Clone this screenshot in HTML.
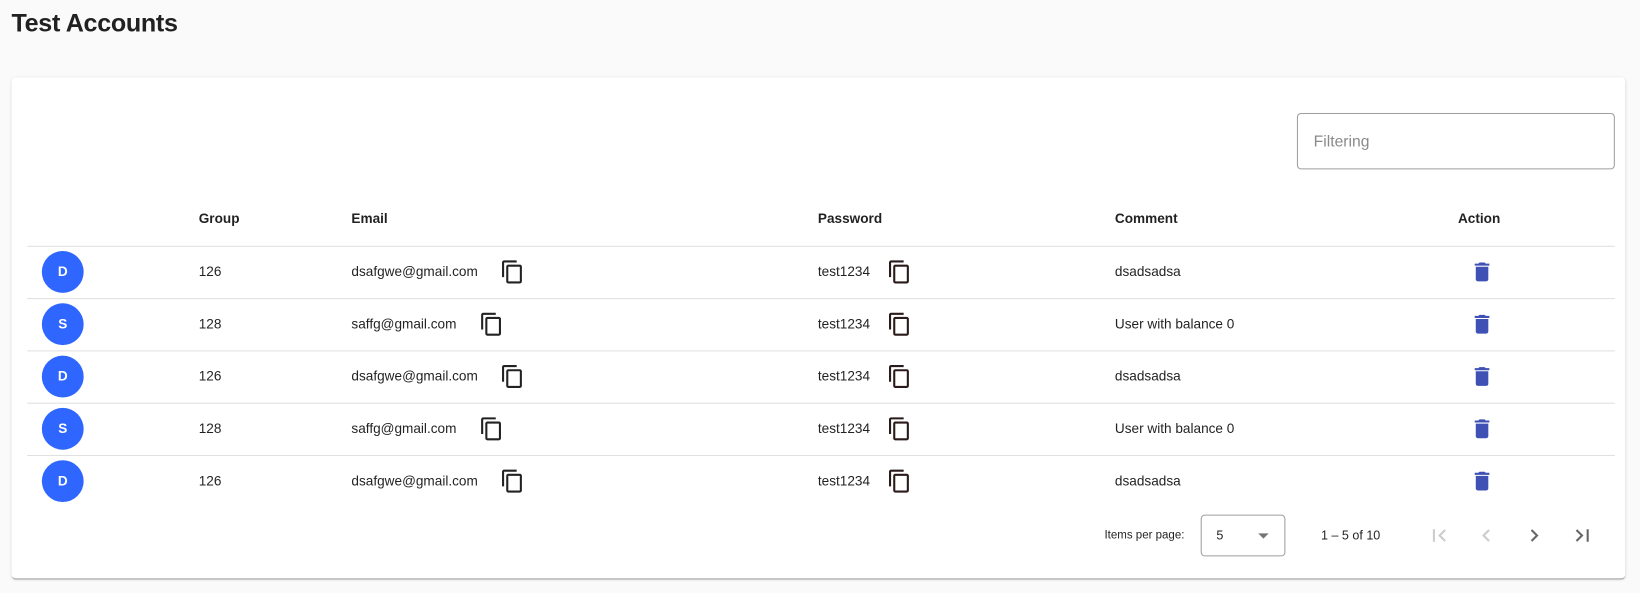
<!DOCTYPE html>
<html><head><style>
*{box-sizing:border-box;margin:0;padding:0}
html,body{width:1640px;height:593px;overflow:hidden;background:#fafafa}
#w{position:absolute;left:0;top:0;width:1568px;height:567px;transform:scale(1.0459);transform-origin:0 0;font-family:"Liberation Sans",sans-serif;color:rgba(0,0,0,.87)}
h1{position:absolute;left:11px;top:9px;font-size:24px;font-weight:bold;color:#212121;letter-spacing:-0.3px}
.card{position:absolute;left:11px;top:74px;width:1543px;height:479px;background:#fff;border-radius:4px;box-shadow:0 2px 1px -1px rgba(0,0,0,.2),0 1px 1px 0 rgba(0,0,0,.14),0 1px 3px 0 rgba(0,0,0,.12)}
.filter{position:absolute;left:1240px;top:108px;width:304px;height:54px;border:1px solid #9e9e9e;border-radius:4px;font-size:15px;color:#8a8a8a;padding:18px 0 0 15px}
.t{position:absolute;font-size:13px;white-space:nowrap}
.h{font-weight:bold;font-size:13px;color:rgba(0,0,0,.87)}
.line{position:absolute;left:26px;width:1518px;height:1px;background:#e0e0e0}
.av{position:absolute;left:40px;width:40px;height:40px;border-radius:50%;background:#2f66ff;color:#fff;font-size:13px;font-weight:bold;text-align:center;line-height:40px}
svg{position:absolute}
.sel{position:absolute;left:1148px;top:492px;width:81px;height:40px;border:1px solid #9e9e9e;border-radius:4px}
</style></head><body><div id="w">
<h1>Test Accounts</h1>
<div class="card"></div>
<div class="filter">Filtering</div>
<div class="t h" style="left:190px;top:201px">Group</div>
<div class="t h" style="left:336px;top:201px">Email</div>
<div class="t h" style="left:782px;top:201px">Password</div>
<div class="t h" style="left:1066px;top:201px">Comment</div>
<div class="t h" style="left:1394px;top:201px">Action</div>
<div class="line" style="top:235px"></div>
<div class="line" style="top:285px"></div>
<div class="line" style="top:335px"></div>
<div class="line" style="top:385px"></div>
<div class="line" style="top:435px"></div>
<div id="rows"></div>
<div class="t" style="left:1056px;top:506px;font-size:11px">Items per page:</div>
<div class="sel"></div>
<div class="t" style="left:1163px;top:505px;font-size:12px">5</div>
<svg style="left:1202px;top:506px" width="12" height="12" viewBox="0 0 12 12"><path d="M1 4l5 5 5-5z" fill="#757575"/></svg>
<div class="t" style="left:1263px;top:505px;font-size:12px">1 – 5 of 10</div>
<svg style="left:1364px;top:500px" width="24" height="24" viewBox="0 0 24 24"><path fill="#ccc" d="M18.41 16.59L13.82 12l4.59-4.59L17 6l-6 6 6 6zM6 6h2v12H6z"/></svg>
<svg style="left:1409px;top:500px" width="24" height="24" viewBox="0 0 24 24"><path fill="#ccc" d="M15.41 7.41L14 6l-6 6 6 6 1.41-1.41L10.83 12z"/></svg>
<svg style="left:1455px;top:500px" width="24" height="24" viewBox="0 0 24 24"><path fill="#666" d="M10 6L8.59 7.41 13.17 12l-4.58 4.59L10 18l6-6z"/></svg>
<svg style="left:1501px;top:500px" width="24" height="24" viewBox="0 0 24 24"><path fill="#666" d="M5.59 7.41L10.18 12l-4.59 4.59L7 18l6-6-6-6zM16 6h2v12h-2z"/></svg>
</div>
<script>
var data=[["D","126","dsafgwe@gmail.com",478,"dsadsadsa"],["S","128","saffg@gmail.com",458,"User with balance 0"],["D","126","dsafgwe@gmail.com",478,"dsadsadsa"],["S","128","saffg@gmail.com",458,"User with balance 0"],["D","126","dsafgwe@gmail.com",478,"dsadsadsa"]];
var copy='<path fill="#222" d="M16 1H4c-1.1 0-2 .9-2 2v14h2V3h12V1zm3 4H8c-1.1 0-2 .9-2 2v14c0 1.1.9 2 2 2h11c1.1 0 2-.9 2-2V7c0-1.1-.9-2-2-2zm0 16H8V7h11v14z"/>';
var trash='<path fill="#3f51b5" d="M6 19c0 1.1.9 2 2 2h8c1.1 0 2-.9 2-2V7H6v12zM19 4h-3.5l-1-1h-5l-1 1H5v2h14V4z"/>';
var h='';
data.forEach(function(r,i){var c=260+i*50;
h+='<div class="av" style="top:'+(c-20)+'px">'+r[0]+'</div>';
h+='<div class="t" style="left:190px;top:'+(c-8)+'px">'+r[1]+'</div>';
h+='<div class="t" style="left:336px;top:'+(c-8)+'px">'+r[2]+'</div>';
h+='<svg style="left:'+r[3]+'px;top:'+(c-12)+'px" width="24" height="24" viewBox="0 0 24 24">'+copy+'</svg>';
h+='<div class="t" style="left:782px;top:'+(c-8)+'px">test1234</div>';
h+='<svg style="left:848px;top:'+(c-12)+'px" width="24" height="24" viewBox="0 0 24 24">'+copy.replace('#222','#2a1a1a')+'</svg>';
h+='<div class="t" style="left:1066px;top:'+(c-8)+'px">'+r[4]+'</div>';
h+='<svg style="left:1405px;top:'+(c-12)+'px" width="24" height="24" viewBox="0 0 24 24">'+trash+'</svg>';
});
document.getElementById('rows').innerHTML=h;
</script>
</body></html>
